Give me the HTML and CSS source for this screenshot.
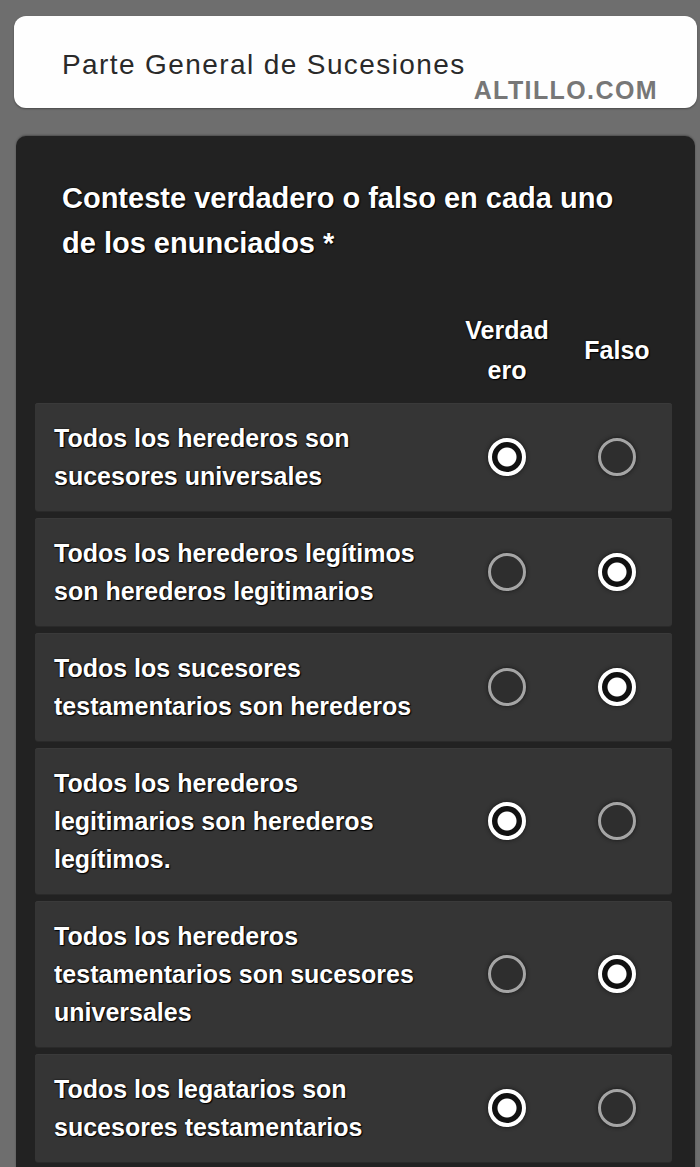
FILE: index.html
```html
<!DOCTYPE html>
<html lang="es">
<head>
<meta charset="utf-8">
<title>Parte General de Sucesiones</title>
<link rel="stylesheet" href="styles.css">
</head>
<body>
<div class="page">
  <header class="title-card">
    <div class="title-text">Parte General de Sucesiones</div>
    <div class="brand">ALTILLO.COM</div>
  </header>

  <section class="question-card">
    <h2 class="question">Conteste verdadero o falso en cada uno de los enunciados *</h2>

    <div class="grid-head">
      <div></div>
      <div class="col-label"><span class="narrow">Verdadero</span></div>
      <div class="col-label">Falso</div>
    </div>

    <div class="rows">
      <div class="row">
        <div class="stmt">Todos los herederos son sucesores universales</div>
        <div class="cell"><span class="radio checked"></span></div>
        <div class="cell"><span class="radio"></span></div>
      </div>
      <div class="row">
        <div class="stmt">Todos los herederos legítimos son herederos legitimarios</div>
        <div class="cell"><span class="radio"></span></div>
        <div class="cell"><span class="radio checked"></span></div>
      </div>
      <div class="row">
        <div class="stmt">Todos los sucesores testamentarios son herederos</div>
        <div class="cell"><span class="radio"></span></div>
        <div class="cell"><span class="radio checked"></span></div>
      </div>
      <div class="row">
        <div class="stmt">Todos los herederos legitimarios son herederos legítimos.</div>
        <div class="cell"><span class="radio checked"></span></div>
        <div class="cell"><span class="radio"></span></div>
      </div>
      <div class="row">
        <div class="stmt">Todos los herederos testamentarios son sucesores universales</div>
        <div class="cell"><span class="radio"></span></div>
        <div class="cell"><span class="radio checked"></span></div>
      </div>
      <div class="row">
        <div class="stmt">Todos los legatarios son sucesores testamentarios</div>
        <div class="cell"><span class="radio checked"></span></div>
        <div class="cell"><span class="radio"></span></div>
      </div>
    </div>
  </section>
</div>
</body>
</html>
```

FILE: styles.css
```css
html, body {
  margin: 0;
  padding: 0;
}

body {
  background: #6e6e6e;
  font-family: "Liberation Sans", Arial, Helvetica, sans-serif;
  height: 1167px;
  overflow: hidden;
}

.page {
  padding: 16px 3px 0 14px;
  display: flex;
  flex-direction: column;
}

.title-card {
  background: #fefefe;
  border-radius: 12px;
  height: 92px;
  box-sizing: border-box;
  padding: 35px 39px 0 48px;
  display: flex;
  flex-direction: column;
  box-shadow: 0 1px 2px rgba(0,0,0,0.35);
}

.title-text {
  font-size: 28px;
  line-height: 28px;
  letter-spacing: 1.4px;
  color: #2a2a2a;
}

.brand {
  align-self: flex-end;
  font-size: 25px;
  line-height: 22px;
  font-weight: bold;
  letter-spacing: 1.4px;
  color: #777777;
}

.question-card {
  margin: 28px 2px 0 2px;
  background: #222222;
  border-radius: 10px 10px 0 0;
  padding: 40px 23px 20px 19px;
  box-shadow: 0 -1px 2px rgba(0,0,0,0.3);
}

.question {
  margin: 0;
  padding: 0 40px 0 27px;
  font-size: 29px;
  line-height: 45px;
  font-weight: bold;
  color: #ffffff;
  text-shadow: 0 0 2px #000, 1px 1px 1px #000;
}

.grid-head {
  display: grid;
  grid-template-columns: 1fr 110px 110px;
  align-items: center;
  margin-top: 44px;
  margin-bottom: 13px;
}

.col-label {
  text-align: center;
  font-size: 25px;
  line-height: 40px;
  font-weight: bold;
  color: #ffffff;
  text-shadow: 0 0 2px #000, 1px 1px 1px #000;
}

.narrow {
  display: inline-block;
  width: 88px;
  word-break: break-all;
}

.rows {
  display: flex;
  flex-direction: column;
  gap: 7px;
}

.row {
  display: grid;
  grid-template-columns: 1fr 110px 110px;
  align-items: center;
  background: #353535;
  border-radius: 3px;
  padding: 16px 0 16px 19px;
  box-shadow: 0 1px 0 #2a2a2a, inset 0 1px 0 #3a3a3a;
}

.stmt {
  font-size: 25px;
  line-height: 38px;
  font-weight: bold;
  color: #ffffff;
  padding-right: 20px;
  text-shadow: 0 0 2px #000, 1px 1px 1px #000;
}

.cell {
  display: flex;
  justify-content: center;
  align-items: center;
}

.radio {
  width: 38px;
  height: 38px;
  box-sizing: border-box;
  border-radius: 50%;
  border: 3px solid #a5a5a5;
  background: #2e2e2e;
  box-shadow: 0 0 4px #151515;
}

.radio.checked {
  border: 4px solid #ffffff;
  background: radial-gradient(circle, #ffffff 0 9px, #111111 10px);
}
```
